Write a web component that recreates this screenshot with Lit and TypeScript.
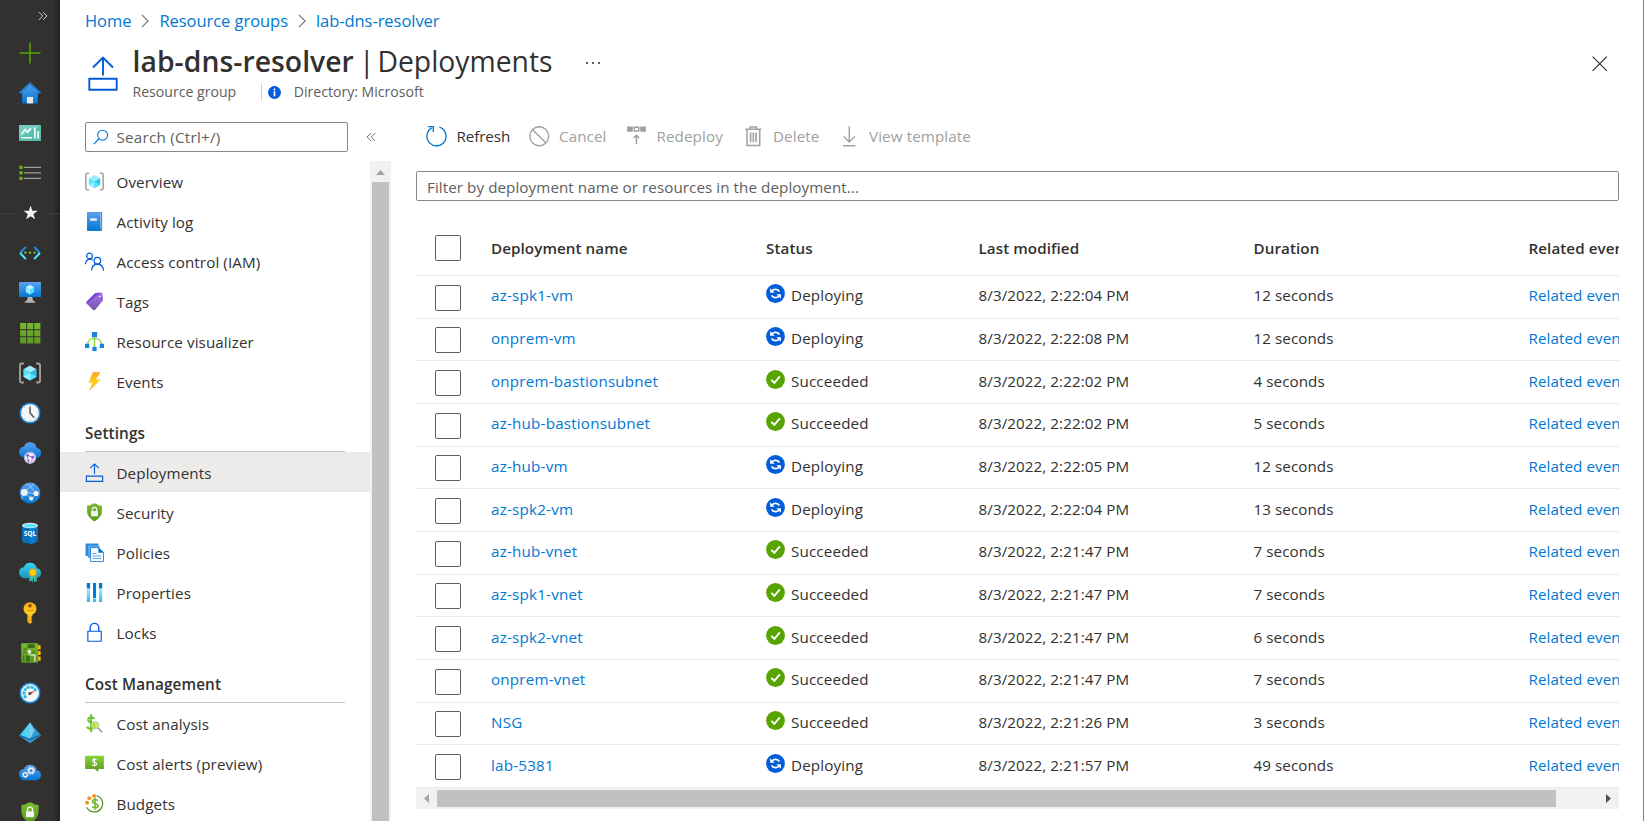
import { LitElement, html, css, svg } from "lit";
import { customElement } from "lit/decorators.js";

const gradients = svg`<defs>
  <linearGradient id="blue" x1="0" y1="0" x2="0" y2="1"><stop offset="0" stop-color="#5ea0ef"/><stop offset="1" stop-color="#0078d4"/></linearGradient>
  <linearGradient id="green" x1="0" y1="0" x2="0" y2="1"><stop offset="0" stop-color="#76bc2d"/><stop offset="1" stop-color="#5e9624"/></linearGradient>
  <linearGradient id="lime" x1="0" y1="0" x2="0" y2="1"><stop offset="0" stop-color="#86d633"/><stop offset="1" stop-color="#5e9624"/></linearGradient>
  <linearGradient id="cyan" x1="0" y1="0" x2="0" y2="1"><stop offset="0" stop-color="#32d4f5"/><stop offset="1" stop-color="#2294b8"/></linearGradient>
  <linearGradient id="gold" x1="0" y1="0" x2="0" y2="1"><stop offset="0" stop-color="#fea11b"/><stop offset=".5" stop-color="#ffcf1f"/><stop offset="1" stop-color="#feb21c"/></linearGradient>
  <linearGradient id="violet" x1="0" y1="0" x2="0" y2="1"><stop offset="0" stop-color="#a67af4"/><stop offset="1" stop-color="#7650a8"/></linearGradient>
  <linearGradient id="paleblue" x1="0" y1="0" x2="0" y2="1"><stop offset="0" stop-color="#9feaff"/><stop offset="1" stop-color="#32bedd"/></linearGradient>
</defs>`;

const cube = svg`
  <path d="M9 2.900 14.400 6 9 9.100 3.600 6z" fill="#9cebff"/>
  <path d="M3.600 6 9 9.100v6.100L3.600 12.100z" fill="#50e6ff"/>
  <path d="M14.400 6 9 9.100v6.100l5.400-3.100z" fill="#32bedd"/>
  <path d="M3.600 12.100 9 9.100v6.100z" fill="#9cebff"/><path d="M14.400 12.100 9 9.100v6.100z" fill="#50e6ff"/>`;
const brackets = svg`<path d="M4 1.200H2.300q-1.500 0-1.500 1.500v12.600q0 1.500 1.500 1.500H4M14 1.200h1.700q1.500 0 1.500 1.500v12.600q0 1.500-1.500 1.500H14" fill="none" stroke="#a3a3a3" stroke-width="1.500"/>`;
const shield = svg`
  <path d="M16 8.400c0 4.600-5.500 8.300-6.700 9a.6.600 0 0 1-.6 0C7.500 16.700 2 13 2 8.400V2.900a.6.600 0 0 1 .6-.6C6.900 2.200 5.900.4 9 .4s2.100 1.800 6.400 1.900a.6.600 0 0 1 .6.600z" fill="url(#green)"/>
  <rect x="5.700" y="7.500" width="6.600" height="5" rx=".6" fill="#f2f2f2"/>
  <path d="M6.900 7.700V6.300a2.100 2.100 0 0 1 4.200 0v1.400" fill="none" stroke="#f2f2f2" stroke-width="1.100"/>`;
const deploy = svg`<path d="M9 10.200V1M4.900 4.900 9 .9l4.100 4M1.300 12.400h15.400v5H1.300z" fill="none" stroke="#015cda" stroke-width="1.100"/>`;

const icons: Record<string, unknown> = {
  plus: svg`<path d="M9 .4v17.200M.4 9h17.200" stroke="#57a300" stroke-width="1.300" fill="none"/>`,
  home: svg`<path d="M9 .2 17.900 8.500q.2.800-.8.800H15.400v7.500q0 .7-.7.700H3.300q-.7 0-.7-.7V9.300H.9Q-.1 9.300.1 8.500z" fill="url(#blue)"/><path d="M9 .2 17.900 8.500q.2.800-.8.800L9 2 .9 9.300Q-.1 9.300.1 8.500z" fill="#1b73c4"/><path d="M6.500 12.200h5v5.300h-5z" fill="#e8e8e8"/>`,
  dashboard: svg`<path d="M0 2.500h18v13H0z" fill="#5bbfb0"/><path d="M0 2.500h18L0 13z" fill="#71ccbf"/><path d="M2 10 5 6.200l2 2.300L9.700 5M2 12.900h8.500M13 4.500v9M15.700 7.500v6" stroke="#f2fbfa" stroke-width="1.400" fill="none"/>`,
  list: svg`<path d="M4 4.400h14M4 8.900h14M4 13.400h14" stroke="#9a9a98" stroke-width=".9"/><path d="M.3 3h2.700v2.800H.3zM.3 7.500h2.700v2.800H.3zM.3 12h2.700v2.800H.3z" fill="#6bb021"/>`,
  star: svg`<path d="M9.500 2.900 10.900 7.100h4.500l-3.600 2.700 1.400 4.400L9.500 11.600l-3.700 2.600 1.400-4.400-3.600-2.700h4.500z" fill="#f3f2f1"/>`,
  code: svg`<path d="M5.600 4 .9 9" stroke="#1e8fe0" stroke-width="1.700"/><path d="m.9 9 4.700 5" stroke="#50e6ff" stroke-width="1.700"/><path d="m12.400 4 4.700 5" stroke="#1e8fe0" stroke-width="1.700"/><path d="m17.100 9-4.700 5" stroke="#50e6ff" stroke-width="1.700"/><circle cx="5.200" cy="8.700" r=".95" fill="#86d633"/><circle cx="9" cy="8.700" r=".95" fill="#86d633"/><circle cx="12.700" cy="8.700" r=".95" fill="#86d633"/>`,
  vm: svg`<rect y=".1" width="18" height="12.200" rx=".5" fill="url(#blue)"/><path d="M7 12.300h4c0 2.400.5 3.200 2.300 3.800v.9H4.700v-.9C6.500 15.500 7 14.700 7 12.300z" fill="#b3b3b3"/><path d="m9 2.300 3.400 2L9 6.300 5.600 4.300z" fill="#c3f1ff"/><path d="M5.600 4.300 9 6.300v3.900L5.600 8.200z" fill="#9cebff"/><path d="M12.400 4.300 9 6.300v3.900l3.400-2z" fill="#50e6ff"/>`,
  grid: svg`<path d="M.9.900h5v5h-5zM6.700.9h5v5h-5zM12.500.9h5v5h-5zM.9 6.700h5v5h-5zM6.700 6.700h5v5h-5zM12.500 6.700h5v5h-5zM.9 12.500h5v5h-5zM6.700 12.500h5v5h-5zM12.500 12.500h5v5h-5z" fill="url(#green)"/>`,
  group: svg`${brackets}${cube}`,
  clock: svg`<circle cx="9" cy="9" r="8.600" fill="#1687dc"/><circle cx="9" cy="9" r="7.400" fill="#f6f6f6"/><path d="M9 3.800V9l3.400 3.800" fill="none" stroke="#606060" stroke-width="1.300"/><path d="M9 2.300v1M9 14.700v1M2.300 9h1M14.700 9h1M4.300 4.300l.6.6M13.100 13.100l.6.600M13.700 4.300l-.6.600M4.900 13.100l-.6.600" stroke="#a0a0a0" stroke-width=".7"/>`,
  cloudnet: svg`<path d="M18 8.900a4 4 0 0 0-3.500-3.900A5.100 5.100 0 0 0 9.200.2 5.300 5.300 0 0 0 4.100 3.600 4.900 4.900 0 0 0 0 8.300a5 5 0 0 0 5.100 4.800h9A4.100 4.100 0 0 0 18 8.900z" fill="url(#blue)"/><circle cx="9" cy="12.900" r="4.900" fill="#f4f1fa"/><circle cx="9" cy="12.900" r="4.300" fill="none" stroke="#a48fd6" stroke-width=".7"/><path d="m6.900 10.900 4.300 1.500-.9 3.500M6.900 10.900l.6 4.600" fill="none" stroke="#8661c5" stroke-width=".7"/><circle cx="7" cy="10.900" r="1.100" fill="#8661c5"/><circle cx="11.200" cy="12.400" r="1.100" fill="#8661c5"/><circle cx="7.700" cy="15.500" r=".9" fill="#8661c5"/>`,
  globe: svg`<circle cx="9" cy="9" r="8.500" fill="url(#blue)"/><path d="m4.300 8.500 10 1M4.300 8.500l6 5.300 4-4.300M4.300 8.500 12 1.500M14.300 9.500 7 1.500M4.300 8.500 2 14" stroke="#9cc9f5" stroke-width=".8" fill="none"/><circle cx="4.300" cy="8.500" r="2.800" fill="#f2f2f2"/><circle cx="14" cy="9.400" r="2.100" fill="#f2f2f2"/><circle cx="10" cy="13.600" r="1.700" fill="#f2f2f2"/>`,
  sql: svg`<path d="M2.500 3v12.400c0 1.300 2.900 2.300 6.500 2.300s6.500-1 6.500-2.300V3z" fill="#0a70be"/><path d="M9 3h4v14.100c-1 .4-2.400.6-4 .6z" fill="#0f7fd4"/><ellipse cx="9" cy="2.900" rx="6.500" ry="2.300" fill="#e8e8e8"/><ellipse cx="9" cy="3" rx="5" ry="1.500" fill="#50e6ff"/><text x="9" y="11.800" text-anchor="middle" font-size="5.400" font-weight="700" font-family="Open Sans, sans-serif" fill="#fff">SQL</text>`,
  certcloud: svg`<path d="M18 9a4 4 0 0 0-3.500-3.900A5.100 5.100 0 0 0 9.200.6 5.300 5.300 0 0 0 4.100 4 4.900 4.900 0 0 0 0 8.700a5 5 0 0 0 5.100 4.600h9A4.100 4.100 0 0 0 18 9z" fill="url(#cyan)"/><path d="M9.400 10 8.100 16l2-.8.900 1.800.8-5h.3l.3 4.900 1.200-1.500 1.500.8-2-6.200z" fill="#37c2b1"/><circle cx="11.300" cy="8.600" r="3.200" fill="#f5a81c"/><circle cx="11.300" cy="8.600" r="2.100" fill="#ffd400"/>`,
  key: svg`<path d="M14.300 5.400a5.300 5.300 0 0 0-10.600 0 5.200 5.200 0 0 0 3.200 4.800v6l2 1.800 2.100-1.900-1.300-1.300 1.300-1.200-1.200-1.200 1.200-1.100V10.200a5.200 5.200 0 0 0 3.300-4.800z" fill="url(#gold)"/><circle cx="9" cy="3.100" r="1.400" fill="#805000"/><path d="M5.800 7h6.400" stroke="#d08a10" stroke-width=".7"/><path d="M8.200 11v5.500" stroke="#e39a10" stroke-width=".7"/>`,
  board: svg`<path d="M15 2.600h2.700v3.600H15zM15 7.300h2.700v3.400H15zM15 11.800h2.700v3.600H15z" fill="#ffb900"/><rect x="1.800" y="1" width="13.900" height="16" rx=".8" fill="url(#green)"/><path d="M7 1.900h5.800v3H7zM5.800 11h3v5h-3z" fill="#386b14"/><path d="M3.600 6h3M3.600 8.300h2.600M3.700 10.500v5.500M11.800 6.500V9h1.700" stroke="#4b7d1f" stroke-width="1.200" fill="none"/><path d="M8.500 8v3M9.500 10.700h3.400V16" stroke="#cfe8b4" stroke-width="1.200" fill="none"/><circle cx="8.500" cy="7.800" r="1.400" fill="#f0f0f0"/>`,
  gauge: svg`<circle cx="9" cy="9" r="8.600" fill="#1687dc"/><circle cx="9" cy="9" r="7.300" fill="#f6f6f6"/><path d="M5.900 13A5 5 0 1 1 13.800 7.500" fill="none" stroke="#32bedd" stroke-width="2.400" stroke-dasharray="2.600 .5"/><path d="m8.300 8.700 5.400-1.700-4.600 3.300z" fill="#e62323"/><circle cx="8.800" cy="9.500" r="1.300" fill="#555"/>`,
  pyramid: svg`<path d="M9 .5 18 11 9 17.300 0 11z" fill="#2f9bd8"/><path d="M9 .5V14L1.200 10.800z" fill="#50d5f5"/><path d="M9 .5V14l7.800-3.200z" fill="#2a9fd0"/><path d="M9 .5 12.500 7 9 14z" fill="#88ccee"/><path d="m1 11 8 3.300 8-3.300" fill="none" stroke="#145c96" stroke-width="1"/>`,
  gearcloud: svg`<path d="M18 10.700A4 4 0 0 0 14.500 6.800 5.100 5.100 0 0 0 9.200 2.200 5.300 5.300 0 0 0 4.100 5.600 4.900 4.900 0 0 0 0 10.300a5 5 0 0 0 5.100 4.600h9a4.100 4.100 0 0 0 3.900-4.200z" fill="url(#blue)"/><circle cx="5.100" cy="10.500" r="1.600" fill="none" stroke="#f2f2f2" stroke-width="1.100"/><circle cx="5.100" cy="10.500" r="2.300" fill="none" stroke="#f2f2f2" stroke-width=".8" stroke-dasharray=".9 .9"/><circle cx="9.900" cy="7.100" r="1.900" fill="none" stroke="#f2f2f2" stroke-width="1.200"/><circle cx="9.900" cy="7.100" r="2.800" fill="none" stroke="#f2f2f2" stroke-width=".9" stroke-dasharray="1.100 1.100"/>`,
  shield,
  deploy,
  book: svg`<rect x="2" y=".2" width="14.200" height="17.600" rx=".9" fill="#1267b4"/><path d="M3 1.200h12.500v15H3z" fill="#c3e3fa"/><path d="M2 1q0-.8.800-.8H14q.7 0 .7.700v16.200q0 .7-.7.700H2.800q-.8 0-.8-.8z" fill="url(#blue)"/><rect x="4.800" y="6" width="6.400" height="2.300" fill="#f2f2f2"/>`,
  people: svg`<g fill="none" stroke="#015cda" stroke-width="1.200"><circle cx="4.300" cy="3.700" r="2.700"/><path d="M.4 11.600C.5 8 3 6.600 4.900 6.800q1.400.1 2.200.8"/><circle cx="11.700" cy="8.200" r="3.100"/><path d="M6.200 17.600c.2-4 2.600-6 5.500-6s5.600 2 5.900 6"/></g>`,
  tag: svg`<path d="M9.500 1.200 14.600.4q1.600-.1 2 1.400l.5 5.300q0 .8-.5 1.400L9.400 17q-.8.800-1.700 0L1.500 10.900q-.7-.8 0-1.600z" fill="url(#violet)"/><path d="M9.500 1.200 14.600.4 1.700 11 1.500 9.300z" fill="#7a3fe0"/><circle cx="14" cy="4.200" r="1.400" fill="#fff" stroke="#552f99" stroke-width=".7"/>`,
  visualizer: svg`<path d="M9 5v9M9 6c-3.500 0-6.500 2-6.500 6M9 6c3.500 0 6.500 2 6.500 6" fill="none" stroke="#86d633" stroke-width="1.300"/><path d="M6.500 0h5v5h-5z" fill="#1a82dc"/><path d="M0 11.200h4v4H0zM14 11.200h4v4h-4zM7 14h4v4H7z" fill="#1a82dc"/>`,
  bolt: svg`<path d="M7.300.2h7.400L10.300 7h4.500L4 17.900l3-7.600H3.400z" fill="url(#gold)"/>`,
  policies: svg`<path d="M.5.500h12.200v11.800H.5z" fill="#2b88d8"/><path d="M2.700 2.200h11v12H2.700z" fill="#5ea0ef"/><path d="M5.200 4.400h7.600l4.700 4.600v8.600H5.200z" fill="#f4f9ff" stroke="#2b88d8" stroke-width=".9"/><path d="M12.600 4v5.200h5.200z" fill="#0078d4"/><path d="M7.300 10h3.500M7.300 12.300h8M7.300 14.600h8" stroke="#5ea0ef" stroke-width="1"/>`,
  properties: svg`<path d="M1.700 5.800h3.100V18H1.700zM7.600 15.200h2.900V18H7.600zM13.200 5.800h3.100V18h-3.100z" fill="url(#paleblue)"/><path d="M1.700 0h3.100v5.200H1.700zM7.600 0h2.900v14.400H7.600zM13.200 0h3.100v5.200h-3.100z" fill="#0078d4"/>`,
  lock: svg`<path d="M2.700 7.800h12.700v9.500H2.700z" fill="none" stroke="#015cda" stroke-width="1.100"/><path d="M4.900 7.700V4.500a4.100 4.100 0 0 1 8.200 0v3.200" fill="none" stroke="#015cda" stroke-width="1.300"/>`,
  cost: svg`<path d="M8.800 4.800C8.300 3 3 2.300 3 5.400c0 3.600 6 2.500 6 5.900 0 3.600-6.100 3.300-7 .6M5.800.3v16.900" fill="none" stroke="#6cc22d" stroke-width="1.900"/><circle cx="9.700" cy="10.700" r="3.600" fill="#b4ec36" fill-opacity=".8" stroke="#c4c4c4" stroke-width=".9"/><path d="m12.300 13.300 4 4" stroke="#969696" stroke-width="1.500"/>`,
  alert: svg`<path d="M.1 1.600h17.800v12.500h-5.300v3l-3.500-3h-9z" fill="url(#lime)"/><path d="M11 5.700C10 4.500 7.200 4.700 7.200 6.300 7.200 8.300 11 7.400 11 9.400c0 1.800-3.100 1.800-4.200.6M9 3.800v8.100" fill="none" stroke="#fff" stroke-width="1"/>`,
  budget: svg`<path d="M11 1.500a7.900 7.900 0 1 1-9.300 11" fill="none" stroke="#5e9624" stroke-width="1.200"/><path d="M12.200 6.500C11.300 4.700 7.100 4.700 7.100 7c0 2.800 5.300 1.600 5.300 4.200 0 2.500-4.700 2.300-5.800.5M9.500 3.500v11.500" fill="none" stroke="#6cba2c" stroke-width="1.500"/><circle cx="2" cy="8.300" r="1.800" fill="#f78d1e"/><circle cx="4" cy="4" r="1.800" fill="#f78d1e"/><circle cx="8.600" cy="1.800" r="1.800" fill="#f78d1e"/>`,
  search: svg`<circle cx="10.800" cy="7" r="5.600" fill="none" stroke="#0078d4" stroke-width="1.200"/><path d="M6.800 11 .9 17" stroke="#0078d4" stroke-width="1.300"/>`,
  refresh: svg`<path d="M11.800 1A8.400 8.400 0 1 1 5 1.700" fill="none" stroke="#0078d4" stroke-width="1.200"/><path d="M1.700.5h4.700v4.800" fill="none" stroke="#0078d4" stroke-width="1.200"/>`,
  cancel: svg`<circle cx="9" cy="9" r="8.300" fill="none" stroke="#a19f9d" stroke-width="1.200"/><path d="m3.200 3.200 11.600 11.600" stroke="#a19f9d" stroke-width="1.200"/>`,
  redeploy: svg`<path d="M1 .5h5v4.500H1zM12.500.5h5v4.500h-5z" fill="#a19f9d"/><path d="M7.300 1.100h3.900v3.300H7.300z" fill="none" stroke="#a19f9d" stroke-width="1.300"/><path d="M9.200 16V8M6.700 10.500 9.200 8.100l2.500 2.400" fill="none" stroke="#a19f9d" stroke-width="1.300"/>`,
  trash: svg`<path d="M2 2.900h14.200M6.300 2.800V.9h5.500v2M3.500 3v14.100h11.200V3" fill="none" stroke="#a19f9d" stroke-width="1.300"/><path d="M6.700 5.700v8.600M9.100 5.700v8.600M11.500 5.700v8.600" stroke="#a19f9d" stroke-width="1.400"/>`,
  download: svg`<path d="M9 .3v13.500M4 9.100l5 5 5-5M3.600 17.300h10.800" fill="none" stroke="#a19f9d" stroke-width="1.200"/>`,
  busy: svg`<circle cx="9" cy="9" r="8.900" fill="#015cda"/><path d="M5.600 6.700A4.300 4.300 0 0 1 12.700 7.300M12.400 11.300A4.300 4.300 0 0 1 5.300 10.700" fill="none" stroke="#fff" stroke-width="1.600"/><path d="M3.900 4.100v4.200h4.300zM14.100 13.900V9.700H9.800z" fill="#fff"/>`,
  done: svg`<circle cx="9" cy="9" r="8.900" fill="#57a300"/><path d="m5 9.300 2.900 2.900 5.200-6.100" fill="none" stroke="#fff" stroke-width="1.800"/>`,
  info: svg`<circle cx="9" cy="9" r="9" fill="#015cda"/><circle cx="9" cy="4.700" r="1.400" fill="#fff"/><path d="M9 7.300v7" stroke="#fff" stroke-width="2.300"/>`,
  close: svg`<path d="m.7.700 16.600 16.600M17.300.7.700 17.300" stroke="#323130" stroke-width="1.400"/>`,
  chevron: svg`<path d="m5.500 2.200 7 6.800-7 6.800" fill="none" stroke="#797775" stroke-width="1.300"/>`,
  expand: svg`<path d="m1.500 2 7 7-7 7M9 2l7 7-7 7" fill="none" stroke="#dddcda" stroke-width="1.700"/>`,
  collapse: svg`<path d="m9 2-7 7 7 7M16.500 2l-7 7 7 7" fill="none" stroke="#605e5c" stroke-width="1.700"/>`,
};

const icon = (name: string, cls = "") =>
  html`<svg class="icon ${cls}" viewBox="0 0 18 18">${gradients}${icons[name]}</svg>`;

const rail = ["plus", "home", "dashboard", "list", "star", "code", "vm", "grid", "group", "clock", "cloudnet", "globe", "sql", "certcloud", "key", "board", "gauge", "pyramid", "gearcloud", "shield"];

const sections = [
  { title: "", items: [["group", "Overview"], ["book", "Activity log"], ["people", "Access control (IAM)"], ["tag", "Tags"], ["visualizer", "Resource visualizer"], ["bolt", "Events"]] },
  { title: "Settings", items: [["deploy", "Deployments"], ["shield", "Security"], ["policies", "Policies"], ["properties", "Properties"], ["lock", "Locks"]] },
  { title: "Cost Management", items: [["cost", "Cost analysis"], ["alert", "Cost alerts (preview)"], ["budget", "Budgets"]] },
];

const commands = [["refresh", "Refresh"], ["cancel", "Cancel"], ["redeploy", "Redeploy"], ["trash", "Delete"], ["download", "View template"]];

const rows: [string, boolean, string, string][] = [
  ["az-spk1-vm", false, "2:22:04", "12"],
  ["onprem-vm", false, "2:22:08", "12"],
  ["onprem-bastionsubnet", true, "2:22:02", "4"],
  ["az-hub-bastionsubnet", true, "2:22:02", "5"],
  ["az-hub-vm", false, "2:22:05", "12"],
  ["az-spk2-vm", false, "2:22:04", "13"],
  ["az-hub-vnet", true, "2:21:47", "7"],
  ["az-spk1-vnet", true, "2:21:47", "7"],
  ["az-spk2-vnet", true, "2:21:47", "6"],
  ["onprem-vnet", true, "2:21:47", "7"],
  ["NSG", true, "2:21:26", "3"],
  ["lab-5381", false, "2:21:57", "49"],
];

@customElement("app-root")
export class AppRoot extends LitElement {
  static styles = css`
    :host { display: flex; box-sizing: border-box; width: 100%; height: 821px; overflow: hidden; background: #fff; border-right: 1px solid #808080; font: 15.2px/20px "Open Sans", "Noto Sans", sans-serif; color: #323130; white-space: nowrap; }
    * { box-sizing: border-box; }
    .icon { display: block; flex: none; width: 19px; height: 19px; overflow: visible; }
    a { color: #0078d4; text-decoration: none; }
    .rail { width: 60px; flex: none; overflow: hidden; background: linear-gradient(90deg, #323130 52px, #2b2a29 56px, #21201f 60px); }
    .expand { height: 33px; display: flex; justify-content: flex-end; padding: 11px 12px 0 0; }
    .expand .icon { width: 10px; height: 10px; }
    .slot { height: 40px; display: flex; align-items: center; justify-content: center; }
    .slot .icon { width: 22px; height: 22px; }
    .slot.star { justify-content: space-between; }
    .slot.star::before, .slot.star::after { content: ""; width: 16px; height: 1px; background: #3f3d3b; }
    .page { flex: 1; min-width: 0; display: flex; flex-direction: column; }
    .crumbs { height: 42px; display: flex; align-items: center; padding-left: 25px; font-size: 16.5px; letter-spacing: -.05px; }
    .crumbs .icon { width: 16px; height: 16px; margin: 0 6px 0 6px; }
    .crumbs a { line-height: 22px; }
    .head { height: 80px; display: flex; padding: 0 36px 0 28px; }
    .head .mark { width: 30px; height: 35px; margin-top: 14px; }
    .titles { margin-left: 14.500px; flex: 1; }
    h1 { margin: 0; height: 40px; line-height: 39px; display: flex; font-size: 28.300px; font-weight: 400; }
    h1 b { font-weight: 600; letter-spacing: .05px; }
    .bar { margin: 0 3px 0 5px; }
    .dots { display: flex; gap: 4px; margin: 20px 0 0 33px; }
    .dots i { width: 2px; height: 2px; background: #605e5c; }
    .sub { display: flex; align-items: center; height: 20px; color: #605e5c; font-size: 14.100px; }
    .sub .icon { width: 13px; height: 13px; margin: 0 12.500px 0 6px; }
    .rule { width: 1px; height: 18px; background: #d2d0ce; margin-left: 25px; }
    .close { width: 15.500px; height: 15.500px; margin-top: 14px; }
    .body { flex: 1; min-height: 0; display: flex; }
    .side { width: 331px; flex: none; display: flex; flex-direction: column; }
    .find { display: flex; align-items: center; padding-left: 25px; height: 30px; flex: none; }
    .searchbox { width: 263px; height: 30px; border: 1px solid #8a8886; border-radius: 2px; display: flex; align-items: center; padding-left: 7px; gap: 7.500px; color: #605e5c; letter-spacing: .25px; }
    .searchbox .icon { width: 16px; height: 16px; }
    .find > .icon { width: 10px; height: 10px; margin-left: 18px; }
    .menuwrap { flex: 1; min-height: 0; display: flex; margin-top: 9px; }
    .menu { width: 310px; overflow: hidden; letter-spacing: .1px; }
    .item { height: 40px; display: flex; align-items: center; gap: 12.500px; padding-left: 25px; }
    .item.on { background: #edebe9; }
    .item span { padding-top: 1px; }
    h2 { margin: 0 25px; height: 51px; line-height: 22px; padding-top: 21px; border-bottom: 1px solid #c8c6c4; font-size: 15.300px; font-weight: 600; letter-spacing: .1px; }
    .vbar { width: 21px; background: #f1f1f1; display: flex; flex-direction: column; align-items: center; }
    .vbar svg { width: 9px; height: 5px; margin: 9px 0 7px; flex: none; }
    .thumb { background: #c1c1c1; }
    .vbar .thumb { width: 17px; flex: 1; }
    .content { flex: 1; min-width: 0; padding: 0 24px 0 25px; }
    .cmds { display: flex; align-items: center; height: 28px; padding-left: 10px; color: #a19f9d; }
    .cmd { display: flex; align-items: center; gap: 10px; }
    .cmd:not(.c0) { letter-spacing: .1px; }
    .cmd .icon { width: 20.500px; height: 20.500px; }
    .c0 { color: #323130; width: 102.500px; letter-spacing: -.1px; } .c1 { width: 97.500px; } .c2 { width: 116.500px; } .c3 { width: 96px; }
    .filter { height: 30px; margin-top: 21px; border: 1px solid #8a8886; border-radius: 2px; padding: 5px 0 0 10px; color: #605e5c; letter-spacing: .07px; }
    .table { overflow: hidden; letter-spacing: .07px; }
    .row { display: grid; grid-template-columns: 75px 275px 212.500px 275px 275px 220px; align-items: center; height: 42.667px; border-bottom: 1px solid #edebe9; width: 1332.500px; }
    .row.top { height: 75px; padding-top: 20px; font-weight: 600; }
    .row:not(.top) a:nth-child(2) { letter-spacing: .2px; }
    .box { width: 26px; height: 26px; border: 1px solid #605e5c; border-radius: 2px; margin: 2px 0 0 19px; }
    .top .box { margin-top: 0; }
    .status { display: flex; align-items: center; gap: 6px; letter-spacing: .15px; }
    .status .icon { margin-top: -3px; }
    .cell { margin-top: -3px; }
    .top .cell { margin-top: 0; }
    .hbar { height: 21px; background: #f1f1f1; display: flex; align-items: center; padding: 0 8px; justify-content: space-between; }
    .hbar svg { width: 5px; height: 9px; flex: none; }
    .hbar .thumb { height: 17px; width: 1119px; margin: 0 50px 0 8px; }
  `;

  render() {
    return html`
      <nav class="rail">
        <div class="expand">${icon("expand")}</div>
        ${rail.map((n) => html`<div class="slot ${n}">${icon(n)}</div>`)}
      </nav>
      <main class="page">
        <div class="crumbs"><a>Home</a>${icon("chevron")}<a>Resource groups</a>${icon("chevron")}<a>lab-dns-resolver</a></div>
        <header class="head">
          <svg class="icon mark" viewBox="0 0 30 35"><path d="M15 19.500V1.500M5 11.500l10-10 10 10M1.300 22.800h27.400v11H1.300z" fill="none" stroke="#015cda" stroke-width="1.900"/></svg>
          <div class="titles">
            <h1><b>lab-dns-resolver</b><span class="bar">|</span><span class="name">Deployments</span><span class="dots"><i></i><i></i><i></i></span></h1>
            <div class="sub"><span class="kind">Resource group</span><span class="rule"></span>${icon("info")}<span class="dir">Directory: Microsoft</span></div>
          </div>
          ${icon("close", "close")}
        </header>
        <div class="body">
          <aside class="side">
            <div class="find"><div class="searchbox">${icon("search")}<span>Search (Ctrl+/)</span></div>${icon("collapse")}</div>
            <div class="menuwrap">
              <div class="menu">
                ${sections.map((s) => html`
                  ${s.title ? html`<h2>${s.title}</h2>` : ""}
                  ${s.items.map(([n, t]) => html`<div class="item ${t === "Deployments" ? "on" : ""}">${icon(n)}<span>${t}</span></div>`)}`)}
              </div>
              <div class="vbar"><svg viewBox="0 0 9 5"><path d="M0 5 4.500 0 9 5z" fill="#a3a3a3"/></svg><div class="thumb"></div></div>
            </div>
          </aside>
          <section class="content">
            <div class="cmds">${commands.map(([n, t], i) => html`<div class="cmd c${i}">${icon(n)}<span>${t}</span></div>`)}</div>
            <div class="filter">Filter by deployment name or resources in the deployment...</div>
            <div class="table">
              <div class="row top"><div class="box"></div>${["Deployment name", "Status", "Last modified", "Duration", "Related events"].map((t) => html`<span class="cell">${t}</span>`)}</div>
              ${rows.map(([name, ok, time, sec]) => html`
                <div class="row">
                  <div class="box"></div>
                  <a class="cell">${name}</a>
                  <div class="cell status">${icon(ok ? "done" : "busy")}<span>${ok ? "Succeeded" : "Deploying"}</span></div>
                  <span class="cell">8/3/2022, ${time} PM</span>
                  <span class="cell">${sec} seconds</span>
                  <a class="cell">Related events</a>
                </div>`)}
            </div>
            <div class="hbar"><svg viewBox="0 0 5 9"><path d="M5 0 0 4.500 5 9z" fill="#a3a3a3"/></svg><div class="thumb"></div><svg viewBox="0 0 5 9"><path d="m0 0 5 4.500L0 9z" fill="#505050"/></svg></div>
          </section>
        </div>
      </main>`;
  }
}
